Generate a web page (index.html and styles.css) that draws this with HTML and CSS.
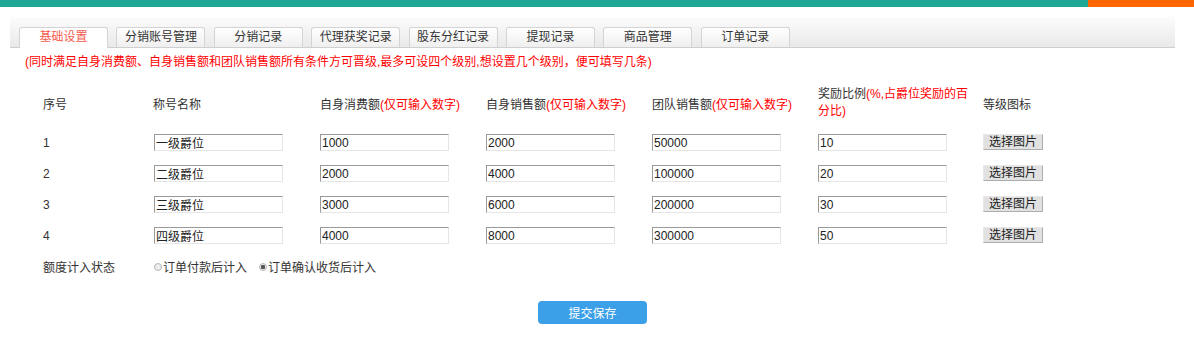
FILE: index.html
```html
<!doctype html>
<html lang="zh-CN">
<head>
    <meta charset="utf-8">
    <title>基础设置</title>
    <link rel="stylesheet" href="styles.css">
</head>
<body>
<div class="topbar">
    <div class="topbar-main"></div>
    <div class="topbar-side"></div>
</div>

<div class="main">
    <div class="tabs">
        <a class="tab current">基础设置</a>
        <a class="tab">分销账号管理</a>
        <a class="tab">分销记录</a>
        <a class="tab">代理获奖记录</a>
        <a class="tab">股东分红记录</a>
        <a class="tab">提现记录</a>
        <a class="tab">商品管理</a>
        <a class="tab">订单记录</a>
    </div>

    <p class="note">(同时满足自身消费额、自身销售额和团队销售额所有条件方可晋级,最多可设四个级别,想设置几个级别，便可填写几条)</p>

    <div class="levels">
        <div class="row row-head">
            <div class="c-no">序号</div>
            <div class="c-name">称号名称</div>
            <div class="c-num">自身消费额<span class="red">(仅可输入数字)</span></div>
            <div class="c-num">自身销售额<span class="red">(仅可输入数字)</span></div>
            <div class="c-num">团队销售额<span class="red">(仅可输入数字)</span></div>
            <div class="c-rate">
                <div class="rate-line">奖励比例<span class="red">(%,占爵位奖励的百</span></div>
                <div class="rate-line red">分比)</div>
            </div>
            <div class="c-icon">等级图标</div>
        </div>

        <div class="row">
            <div class="c-no">1</div>
            <div class="c-name"><input class="txt" type="text" value="一级爵位"></div>
            <div class="c-num"><input class="txt" type="text" value="1000"></div>
            <div class="c-num"><input class="txt" type="text" value="2000"></div>
            <div class="c-num"><input class="txt" type="text" value="50000"></div>
            <div class="c-rate"><input class="txt" type="text" value="10"></div>
            <div class="c-icon"><button class="pick">选择图片</button></div>
        </div>
        <div class="row">
            <div class="c-no">2</div>
            <div class="c-name"><input class="txt" type="text" value="二级爵位"></div>
            <div class="c-num"><input class="txt" type="text" value="2000"></div>
            <div class="c-num"><input class="txt" type="text" value="4000"></div>
            <div class="c-num"><input class="txt" type="text" value="100000"></div>
            <div class="c-rate"><input class="txt" type="text" value="20"></div>
            <div class="c-icon"><button class="pick">选择图片</button></div>
        </div>
        <div class="row">
            <div class="c-no">3</div>
            <div class="c-name"><input class="txt" type="text" value="三级爵位"></div>
            <div class="c-num"><input class="txt" type="text" value="3000"></div>
            <div class="c-num"><input class="txt" type="text" value="6000"></div>
            <div class="c-num"><input class="txt" type="text" value="200000"></div>
            <div class="c-rate"><input class="txt" type="text" value="30"></div>
            <div class="c-icon"><button class="pick">选择图片</button></div>
        </div>
        <div class="row">
            <div class="c-no">4</div>
            <div class="c-name"><input class="txt" type="text" value="四级爵位"></div>
            <div class="c-num"><input class="txt" type="text" value="4000"></div>
            <div class="c-num"><input class="txt" type="text" value="8000"></div>
            <div class="c-num"><input class="txt" type="text" value="300000"></div>
            <div class="c-rate"><input class="txt" type="text" value="50"></div>
            <div class="c-icon"><button class="pick">选择图片</button></div>
        </div>

        <div class="row">
            <div class="c-no">额度计入状态</div>
            <div class="radios">
                <label class="radio"><input type="radio" name="state">订单付款后计入</label>
                <label class="radio"><input type="radio" name="state" checked>订单确认收货后计入</label>
            </div>
        </div>
    </div>

    <div class="submit-wrap">
        <button class="submit">提交保存</button>
    </div>
</div>
</body>
</html>
```

FILE: styles.css
```css
* {
    padding: 0;
    margin: 0;
    box-sizing: border-box;
}

body {
    font-family: "Liberation Sans", "Noto Sans CJK SC", sans-serif;
    font-size: 12px;
    color: #333;
    background: #fff;
}

.topbar {
    display: flex;
    height: 7px;
}

.topbar-main {
    flex: 1;
    background: #1fa796;
}

.topbar-side {
    width: 106px;
    background: #ff6600;
}

.main {
    width: 1165px;
    margin: 10px 0 0 10px;
}

/* tabs */
.tabs {
    display: flex;
    align-items: flex-end;
    gap: 8.4px;
    height: 31px;
    padding-left: 9px;
    background: linear-gradient(#fcfcfc, #e9e9e9);
    border-bottom: 1px solid #cfcfcf;
}

.tab {
    width: 89px;
    height: 20px;
    line-height: 19px;
    text-align: center;
    color: #333;
    border: 1px solid #d4d4d4;
    border-bottom: 0;
    border-radius: 3px 3px 0 0;
    background: linear-gradient(#ffffff, #efefef);
    cursor: pointer;
}

.tab.current {
    height: 21px;
    margin-bottom: -1px;
    color: #f65a4c;
    background: #fff;
}

.note {
    margin-top: 4px;
    padding-left: 15px;
    line-height: 20px;
    color: #ff0000;
}

/* level table */
.levels {
    margin-top: 14px;
    padding-left: 33px;
}

.row {
    display: flex;
    align-items: center;
    height: 31px;
}

.row-head {
    height: 34px;
    margin-bottom: 7px;
}

.c-no {
    width: 110px;
}

.c-name {
    width: 167px;
}

.c-num {
    width: 166px;
}

.c-rate {
    width: 165px;
}

.rate-line {
    line-height: 17px;
    white-space: nowrap;
}

.red {
    color: #ff0000;
}

.txt {
    display: block;
    width: 129px;
    height: 17px;
    margin-left: 1px;
    padding: 0 1px;
    font: 12px "Liberation Sans", "Noto Sans CJK SC", sans-serif;
    color: #222;
    border: 1px solid #e6e6e6;
    border-top-color: #999;
    border-left-color: #999;
    outline: none;
}

.c-num .txt,
.c-rate .txt {
    margin-left: 0;
}

.pick {
    display: block;
    width: 60px;
    height: 16px;
    margin-top: -1px;
    font: 12px/14px "Liberation Sans", "Noto Sans CJK SC", sans-serif;
    color: #222;
    background: #e1e1e1;
    border: 1px solid #adadad;
    border-top-color: #e8e8e8;
    border-left-color: #e8e8e8;
}

.radios {
    display: flex;
    gap: 12px;
    padding-left: 1px;
}

.radio {
    display: flex;
    align-items: center;
    cursor: pointer;
}

.radio input {
    appearance: none;
    width: 8px;
    height: 8px;
    margin-right: 1px;
    border: 1px solid #b5b5b5;
    border-radius: 50%;
    background: #eee;
}

.radio input:checked {
    background: radial-gradient(circle, #555 0 2px, #eee 2.5px);
}

.submit-wrap {
    display: flex;
    justify-content: center;
    margin-top: 19px;
}

.submit {
    width: 109px;
    height: 23px;
    font: 12px "Liberation Sans", "Noto Sans CJK SC", sans-serif;
    color: #fff;
    background: #3ca0e8;
    border: 0;
    border-radius: 4px;
    cursor: pointer;
}
```
